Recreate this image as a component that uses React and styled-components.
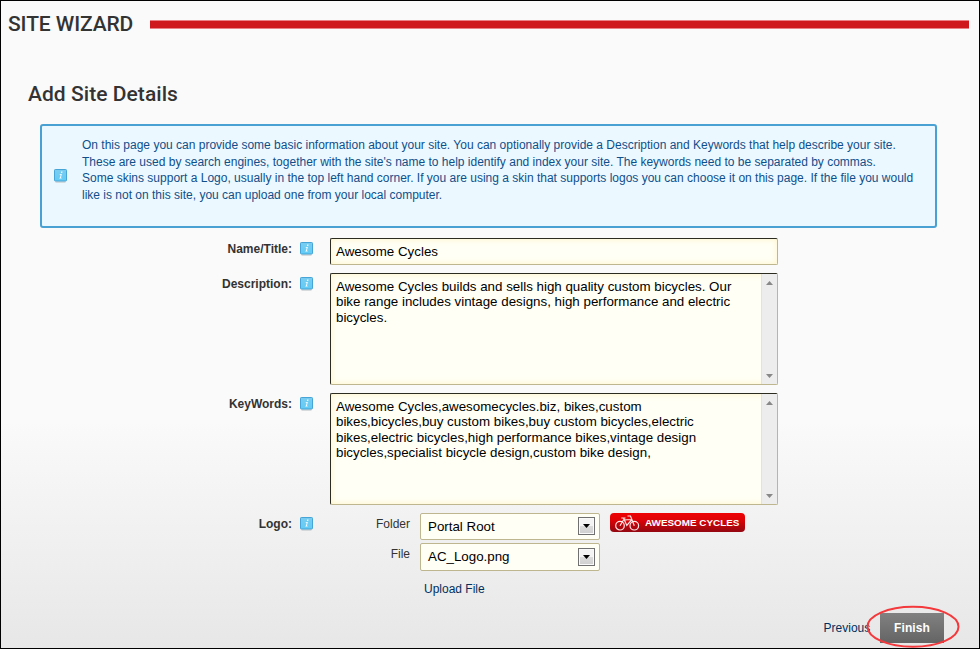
import React from "react";
import styled, { createGlobalStyle } from "styled-components";

const Global = createGlobalStyle`
  * { box-sizing: border-box; }
  body { margin: 0; overflow: hidden; }
`;

const Page = styled.main`
  width: 980px;
  height: 649px;
  border: 1px solid #000;
  background: linear-gradient(#fafafa 0, #fafafa 420px, #e7e7e7 100%);
  font: 12px/18px "Liberation Sans", Arial, sans-serif;
  color: #333;
  display: flex;
  flex-direction: column;
`;

const Header = styled.header`
  height: 45px;
  padding: 0 10px 0 7px;
  display: flex;
  align-items: center;
  justify-content: space-between;
`;

const Heading = styled.h1`
  margin: 0;
  font: 500 21px/28px Roboto, sans-serif;
  letter-spacing: ${(p) => p.$spacing};
  white-space: nowrap;
`;

const Rule = styled.div`
  width: 819px;
  height: 9px;
  margin-top: 1px;
  background: #cf171e;
  border: solid #e98187;
  border-width: 1px 0;
`;

const Section = styled.div`
  padding: 34px 0 0 27px;
  height: 78px;
`;

const Notice = styled.section`
  width: 897px;
  height: 104px;
  margin-left: 39px;
  padding: 10px 0 0 12px;
  border: 2px solid #48a1d2;
  border-radius: 3px;
  background: #ecf8ff;
  color: #0f4f8a;
  display: flex;
  gap: 15px;
`;

const NoticeIcon = styled.span`
  padding-top: 33px;
`;

const NoticeText = styled.div`
  display: flex;
  flex-direction: column;
`;

const NoticeLine = styled.span`
  height: ${(p) => p.$height}px;
  white-space: nowrap;
`;

const Form = styled.form`
  padding-top: 10px;
  display: flex;
  flex-direction: column;
  gap: 8px;
`;

const Row = styled.div`
  display: grid;
  grid-template-columns: 291px 13px auto;
  column-gap: 8px;
  align-items: start;
`;

const Label = styled.label`
  padding-top: 1px;
  text-align: right;
  font-weight: bold;
  line-height: 20px;
`;

const Hint = styled.span`
  padding-top: 4px;
  height: 20px;
`;

const Field = styled.div`
  width: 448px;
  height: ${(p) => p.$height}px;
  margin-left: 9px;
  border: 1px solid #bdb68e;
  border-top-color: #2c2c20;
  border-left-color: #2c2c20;
  border-radius: 2px;
  background: #fffff5;
  box-shadow: inset 0 0 6px #fff3c4;
  color: #000;
  font-size: 13.333px;
  display: flex;
  justify-content: space-between;
`;

const Value = styled.div`
  padding: ${(p) => p.$top}px 0 0 5px;
  display: flex;
  flex-direction: column;
  line-height: 15.4px;
  white-space: nowrap;
`;

const Scrollbar = styled.div`
  width: 16px;
  padding: 7px 4px 6px;
  background: #ededed;
  border-left: 1px solid #e2e2e5;
  display: flex;
  flex-direction: column;
  justify-content: space-between;
  align-items: center;
`;

const LogoArea = styled.div`
  display: flex;
  gap: 10px;
`;

const FileFields = styled.div`
  display: grid;
  grid-template-columns: 89px 180px;
  grid-template-rows: 27px 28px 28px;
  column-gap: 10px;
  row-gap: 3px;
`;

const SubLabel = styled.label`
  padding-top: 1px;
  text-align: right;
  line-height: 21px;
`;

const Select = styled.div`
  border: 1px solid #bdb68e;
  border-radius: 2px;
  background: #fffff5;
  color: #000;
  font-size: 13.333px;
  padding: 0 4px 0 7px;
  display: flex;
  align-items: center;
  justify-content: space-between;
`;

const DropButton = styled.span`
  width: 17px;
  height: 18px;
  margin-top: -1px;
  border: 1px solid #707070;
  background: linear-gradient(#f4f4f4 50%, #dcdcdc 50%, #cfcfcf);
  box-shadow: inset 0 0 0 1px #fafafa;
  display: flex;
  align-items: center;
  justify-content: center;
`;

const Upload = styled.a`
  grid-column: 2;
  padding: 6px 0 0 4px;
  color: #013060;
`;

const Logo = styled.div`
  width: 135px;
  height: 19px;
  border-radius: 4px;
  background: linear-gradient(#ee0204, #df0206 35%, #930711);
  color: #fff;
  font-size: 9.9px;
  font-weight: bold;
  line-height: 19px;
  white-space: nowrap;
  display: flex;
  align-items: center;
  gap: 5px;
  padding-left: 5px;
`;

const Actions = styled.footer`
  margin-top: 11px;
  padding-left: 822.6px;
  display: flex;
  align-items: center;
  gap: 9.4px;
`;

const Previous = styled.a`
  color: #013060;
  width: 47px;
`;

const FinishWrap = styled.div`
  position: relative;
`;

const Finish = styled.button`
  display: block;
  width: 64px;
  height: 30px;
  border: 0;
  padding: 0;
  background: linear-gradient(#818181, #646464);
  color: #fff;
  font: bold 12px "Liberation Sans", Arial, sans-serif;
  letter-spacing: 0.1px;
`;

const Ring = styled.svg`
  position: absolute;
  left: -14px;
  top: -8px;
  pointer-events: none;
`;

const Drawing = styled.svg`
  display: block;
  flex: none;
`;

const InfoIcon = () => (
  <Drawing width="13" height="15" viewBox="0 0 13 15">
    <defs>
      <linearGradient id="info" x2="0" y2="1">
        <stop stopColor="#7accf0" />
        <stop offset="1" stopColor="#62ccf6" />
      </linearGradient>
    </defs>
    <path d="M1.5 13h10" stroke="#c8cdd0" strokeWidth="1.4" />
    <rect x=".5" y=".5" width="12" height="11.5" rx=".8" fill="url(#info)" stroke="#46a5d6" />
    <path d="M7.2 2.5h1.3L8.2 4H6.9zM5.8 5h2L6.9 8.8h.8L7.5 9.5H5.3l.2-.8h.5L6.7 5.8h-1z" fill="#fff" />
  </Drawing>
);

const Arrow = ({ down, color = "#888" }) => (
  <Drawing width="7" height="4" viewBox="0 0 7 4">
    <path d={down ? "M0 0h7L3.5 4z" : "M0 4h7L3.5 0z"} fill={color} />
  </Drawing>
);

const Bike = () => (
  <Drawing width="25" height="16" viewBox="0 0 25 16" fill="none" stroke="#ffe4e4" strokeWidth="1.2">
    <circle cx="5" cy="10.7" r="4.3" />
    <circle cx="19.3" cy="10.7" r="4.3" />
    <path d="M5 10.7L8.5 5L17 4.5M6.3 3h4.2M8.5 3L11.8 10.5L17 4.5M19.3 10.7L15.5 1h-3" />
  </Drawing>
);

const Area = ({ lines }) => (
  <Field $height={112}>
    <Value $top={5}>
      {lines.map((text) => (
        <span key={text}>{text}</span>
      ))}
    </Value>
    <Scrollbar>
      <Arrow />
      <Arrow down />
    </Scrollbar>
  </Field>
);

const FormRow = ({ label, children }) => (
  <Row>
    <Label>{label}</Label>
    <Hint><InfoIcon /></Hint>
    {children}
  </Row>
);

const Dropdown = ({ value }) => (
  <Select>
    {value}
    <DropButton><Arrow down color="#000" /></DropButton>
  </Select>
);

const notice = [
  ["On this page you can provide some basic information about your site. You can optionally provide a Description and Keywords that help describe your site.", 17],
  ["These are used by search engines, together with the site's name to help identify and index your site. The keywords need to be separated by commas.", 16],
  ["Some skins support a Logo, usually in the top left hand corner. If you are using a skin that supports logos you can choose it on this page. If the file you would", 17],
  ["like is not on this site, you can upload one from your local computer.", 17],
];

const description = [
  "Awesome Cycles builds and sells high quality custom bicycles. Our",
  "bike range includes vintage designs, high performance and electric",
  "bicycles.",
];

const keywords = [
  "Awesome Cycles,awesomecycles.biz, bikes,custom",
  "bikes,bicycles,buy custom bikes,buy custom bicycles,electric",
  "bikes,electric bicycles,high performance bikes,vintage design",
  "bicycles,specialist bicycle design,custom bike design,",
];

export default function App() {
  return (
    <Page>
      <Global />
      <Header>
        <Heading $spacing="-0.1px">SITE WIZARD</Heading>
        <Rule />
      </Header>
      <Section>
        <Heading as="h2" $spacing="0.05px">Add Site Details</Heading>
      </Section>
      <Notice>
        <NoticeIcon><InfoIcon /></NoticeIcon>
        <NoticeText>
          {notice.map(([text, height]) => (
            <NoticeLine key={text} $height={height}>{text}</NoticeLine>
          ))}
        </NoticeText>
      </Notice>
      <Form>
        <FormRow label="Name/Title:">
          <Field $height={27}>
            <Value $top={5}>Awesome Cycles</Value>
          </Field>
        </FormRow>
        <FormRow label="Description:"><Area lines={description} /></FormRow>
        <FormRow label="KeyWords:"><Area lines={keywords} /></FormRow>
        <FormRow label="Logo:">
          <LogoArea>
            <FileFields>
              <SubLabel>Folder</SubLabel>
              <Dropdown value="Portal Root" />
              <SubLabel>File</SubLabel>
              <Dropdown value="AC_Logo.png" />
              <Upload>Upload File</Upload>
            </FileFields>
            <Logo><Bike />AWESOME CYCLES</Logo>
          </LogoArea>
        </FormRow>
      </Form>
      <Actions>
        <Previous>Previous</Previous>
        <FinishWrap>
          <Finish type="button">Finish</Finish>
          <Ring width="94" height="44" viewBox="0 0 94 44">
            <ellipse cx="47" cy="21.8" rx="45.5" ry="20" fill="none" stroke="#f4393c" strokeWidth="2" />
          </Ring>
        </FinishWrap>
      </Actions>
    </Page>
  );
}
